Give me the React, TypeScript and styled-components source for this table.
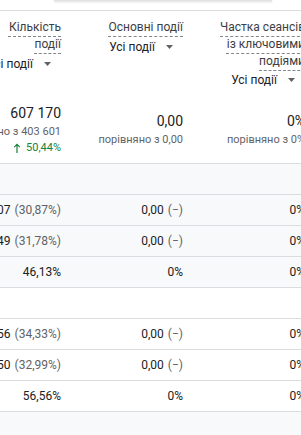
import React from 'react';
import styled, { createGlobalStyle } from 'styled-components';

const GlobalStyle = createGlobalStyle`
  html, body { margin: 0; padding: 0; background: #fff; }
  body {
    font-family: Roboto, "Noto Sans", Arial, sans-serif;
    -webkit-font-smoothing: antialiased;
  }
`;

const Page = styled.div`
  width: 301px;
  height: 435px;
  overflow: hidden;
  background: #fff;
`;

const CardEdge = styled.div`
  margin: 0 29px 0 54px;
  height: 1px;
  background: #e3e3e3;
  box-shadow: 0 1px 2px rgba(60, 64, 67, 0.25);
`;

const Table = styled.div`
  margin-top: 9px;
  width: 321px;
  border-top: 1px solid #dadce0;
`;

const Columns = `
  display: grid;
  grid-template-columns: 77px 122px 122px;
`;

const HeaderRow = styled.div`
  ${Columns}
  align-items: start;
  padding-top: 8px;
`;

const HeaderCell = styled.div`
  display: flex;
  flex-direction: column;
  align-items: flex-end;
  padding-right: 16px;
  min-width: 0;
`;

const Title = styled.div`
  max-width: 92px;
  text-align: right;
  font-size: 12px;
  line-height: 16.8px;
  color: #3c4043;
  text-decoration: underline dashed #80868b;
  text-decoration-thickness: 1px;
  text-underline-offset: 5px;
`;

const Dropdown = styled.div`
  display: flex;
  align-items: center;
  gap: 11px;
  height: 22px;
  padding-right: 10px;
  font-size: 12px;
  color: #202124;
  white-space: nowrap;
`;

const TotalsRow = styled.div`
  ${Columns}
  align-items: center;
  box-sizing: border-box;
  height: 73px;
  padding-top: 4px;
  border-bottom: 1px solid #dadce0;
`;

const TotalCell = styled.div`
  display: flex;
  flex-direction: column;
  align-items: flex-end;
  padding-right: 16px;
  white-space: nowrap;
  min-width: 0;
`;

const TotalValue = styled.div`
  font-size: 14px;
  line-height: 22px;
  color: #202124;
`;

const Compare = styled.div`
  font-size: 11px;
  line-height: 16px;
  color: #5f6368;
`;

const Change = styled.div`
  display: flex;
  align-items: center;
  gap: 5px;
  font-size: 11px;
  line-height: 16px;
  color: #188038;
`;

const Row = styled.div<{ $shade: boolean }>`
  ${Columns}
  box-sizing: border-box;
  height: 31px;
  border-bottom: 1px solid #dadce0;
  background: ${(p) => (p.$shade ? '#f8f9fa' : '#ffffff')};
`;

const Cell = styled.div`
  display: flex;
  justify-content: flex-end;
  align-items: center;
  padding-right: 16px;
  font-size: 12px;
  color: #202124;
  white-space: nowrap;
  min-width: 0;
`;

const Share = styled.span`
  color: #5f6368;
  margin-left: 4px;
`;

const Arrow = () => (
  <svg width="7" height="4" viewBox="0 0 7 4">
    <path d="M0 0h7L3.5 4z" fill="#5f6368" />
  </svg>
);

const UpArrow = () => (
  <svg width="8" height="10" viewBox="0 0 8 10">
    <path d="M4 0.5L0.8 3.8l0.8 0.8L3.4 2.8V10h1.2V2.8l1.8 1.8 0.8-0.8z" fill="#188038" />
  </svg>
);

type Metric = { main: string; share?: string };
type DataRow = Metric[];
type Group = { shade: boolean; rows: DataRow[] };

const groups: Group[] = [
  {
    shade: true,
    rows: [
      [{ main: '187 407', share: '(30,87%)' }, { main: '0,00', share: '(−)' }, { main: '0%' }],
      [{ main: '192 949', share: '(31,78%)' }, { main: '0,00', share: '(−)' }, { main: '0%' }],
      [{ main: '46,13%' }, { main: '0%' }, { main: '0%' }],
    ],
  },
  {
    shade: false,
    rows: [
      [{ main: '138 556', share: '(34,33%)' }, { main: '0,00', share: '(−)' }, { main: '0%' }],
      [{ main: '133 150', share: '(32,99%)' }, { main: '0,00', share: '(−)' }, { main: '0%' }],
      [{ main: '56,56%' }, { main: '0%' }, { main: '0%' }],
    ],
  },
  { shade: true, rows: [] },
];

const headers = ['Кількість події', 'Основні події', 'Частка сеансів із ключовими подіями'];

export default function App() {
  return (
    <Page>
      <GlobalStyle />
      <CardEdge />
      <Table>
        <HeaderRow>
          {headers.map((h) => (
            <HeaderCell key={h}>
              <Title>{h}</Title>
              <Dropdown>
                Усі події
                <Arrow />
              </Dropdown>
            </HeaderCell>
          ))}
        </HeaderRow>
        <TotalsRow>
          <TotalCell>
            <TotalValue>607 170</TotalValue>
            <Compare>порівняно з 403 601</Compare>
            <Change>
              <UpArrow />
              50,44%
            </Change>
          </TotalCell>
          <TotalCell>
            <TotalValue>0,00</TotalValue>
            <Compare>порівняно з 0,00</Compare>
          </TotalCell>
          <TotalCell>
            <TotalValue>0%</TotalValue>
            <Compare>порівняно з 0%</Compare>
          </TotalCell>
        </TotalsRow>
        {groups.map((g, gi) => (
          <React.Fragment key={gi}>
            <Row $shade={g.shade}>
              <Cell />
              <Cell />
              <Cell />
            </Row>
            {g.rows.map((r, ri) => (
              <Row $shade={g.shade} key={ri}>
                {r.map((m, mi) => (
                  <Cell key={mi}>
                    {m.main}
                    {m.share && <Share>{m.share}</Share>}
                  </Cell>
                ))}
              </Row>
            ))}
          </React.Fragment>
        ))}
      </Table>
    </Page>
  );
}
